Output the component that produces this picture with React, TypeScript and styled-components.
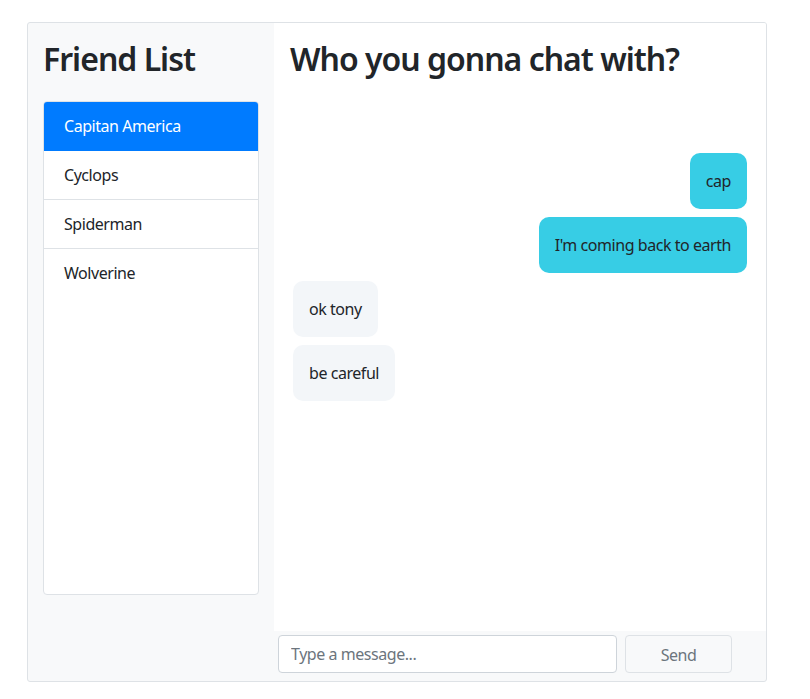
import styled, { createGlobalStyle } from 'styled-components';

const GlobalStyle = createGlobalStyle`
  * { box-sizing: border-box; }
  body {
    margin: 0;
    background: #ffffff;
    font-family: "Noto Sans", "Open Sans", sans-serif;
    color: #212529;
    font-size: 16px;
    line-height: 1.5;
    letter-spacing: -0.45px;
  }
`;

const Page = styled.div`
  padding: 22px 43px 0 27px;
`;

const Card = styled.div`
  display: flex;
  width: 740px;
  height: 660px;
  border: 1px solid #dee2e6;
  border-radius: 3px;
  overflow: hidden;
  background: #f8f9fa;
`;

const Sidebar = styled.aside`
  width: 246px;
  flex-shrink: 0;
  padding: 17px 15px 86px 15px;
  display: flex;
  flex-direction: column;
`;

const Heading = styled.h2`
  margin: 0 0 23px;
  font-size: 32px;
  font-weight: 600;
  line-height: 38px;
  letter-spacing: -1px;
`;

const FriendGroup = styled.ul`
  list-style: none;
  margin: 0;
  padding: 0;
  flex: 1;
  background: #ffffff;
  border: 1px solid #dee2e6;
  border-radius: 4px;
  overflow: hidden;
`;

const FriendItem = styled.li<{ $active?: boolean }>`
  padding: 12px 20px;
  line-height: 24px;
  border-bottom: 1px solid ${p => (p.$active ? '#007bff' : '#dee2e6')};
  background: ${p => (p.$active ? '#007bff' : '#ffffff')};
  color: ${p => (p.$active ? '#ffffff' : '#212529')};
  &:last-child { border-bottom: none; }
`;

const Main = styled.section`
  flex: 1;
  display: flex;
  flex-direction: column;
`;

const ChatPane = styled.div`
  flex: 1;
  background: #ffffff;
  padding: 17px 19px 0 16px;
  display: flex;
  flex-direction: column;
`;

const Messages = styled.div`
  margin-top: 52px;
  display: flex;
  flex-direction: column;
  gap: 8px;
`;

const Bubble = styled.div<{ $mine?: boolean }>`
  align-self: ${p => (p.$mine ? 'flex-end' : 'flex-start')};
  margin-left: ${p => (p.$mine ? '0' : '3px')};
  padding: 16px;
  line-height: 24px;
  border-radius: 10px;
  background: ${p => (p.$mine ? '#37cde5' : '#f3f6f9')};
  color: #212529;
`;

const Composer = styled.form`
  height: 50px;
  display: flex;
  align-items: flex-start;
  gap: 8px;
  padding: 4px 0 0 4px;
`;

const Input = styled.input`
  width: 339px;
  height: 38px;
  padding: 6px 12px;
  font: inherit;
  letter-spacing: inherit;
  color: #495057;
  border: 1px solid #ced4da;
  border-radius: 4px;
  background: #ffffff;
  &::placeholder { color: #6c757d; }
`;

const SendButton = styled.button`
  width: 107px;
  height: 38px;
  padding-top: 2px;
  font: inherit;
  letter-spacing: inherit;
  color: #6c757d;
  background: #f8f9fa;
  border: 1px solid #dee2e6;
  border-radius: 4px;
`;

const friends = ['Capitan America', 'Cyclops', 'Spiderman', 'Wolverine'];

const messages = [
  { text: 'cap', mine: true },
  { text: "I'm coming back to earth", mine: true },
  { text: 'ok tony', mine: false },
  { text: 'be careful', mine: false },
];

export default function App() {
  return (
    <Page>
      <GlobalStyle />
      <Card>
        <Sidebar>
          <Heading>Friend List</Heading>
          <FriendGroup>
            {friends.map((f, i) => (
              <FriendItem key={f} $active={i === 0}>{f}</FriendItem>
            ))}
          </FriendGroup>
        </Sidebar>
        <Main>
          <ChatPane>
            <Heading>Who you gonna chat with?</Heading>
            <Messages>
              {messages.map(m => (
                <Bubble key={m.text} $mine={m.mine}>{m.text}</Bubble>
              ))}
            </Messages>
          </ChatPane>
          <Composer onSubmit={e => e.preventDefault()}>
            <Input placeholder="Type a message..." />
            <SendButton type="submit">Send</SendButton>
          </Composer>
        </Main>
      </Card>
    </Page>
  );
}
